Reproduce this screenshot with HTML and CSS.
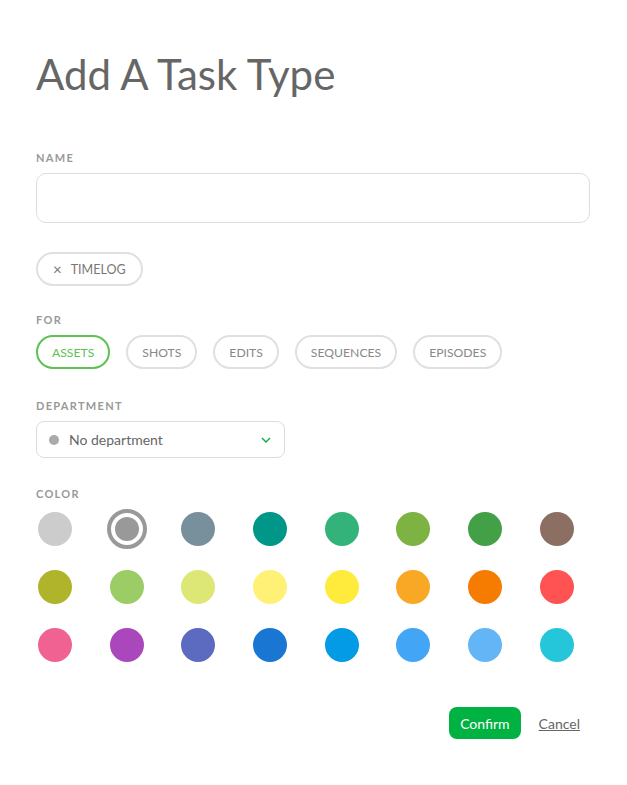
FILE: index.html
```html
<!DOCTYPE html>
<html>
<head>
<meta charset="utf-8">
<link rel="stylesheet" href="styles.css">
</head>
<body>
<div class="modal">
  <h1 class="title">Add A Task Type</h1>

  <div class="field name-field">
    <label class="label">Name</label>
    <input class="input" type="text">
  </div>

  <div class="tag-row">
    <span class="tag"><span class="tag-x">×</span>TIMELOG</span>
  </div>

  <div class="field for-field">
    <label class="label">For</label>
    <div class="pills">
      <span class="pill active">ASSETS</span>
      <span class="pill">SHOTS</span>
      <span class="pill">EDITS</span>
      <span class="pill">SEQUENCES</span>
      <span class="pill">EPISODES</span>
    </div>
  </div>

  <div class="field dept-field">
    <label class="label">Department</label>
    <div class="select">
      <span class="dot"></span>
      <span class="select-text">No department</span>
      <svg class="chev" width="10" height="6" viewBox="0 0 10 6"><path d="M1 1 L5 5 L9 1" fill="none" stroke="#00b242" stroke-width="1.4"/></svg>
    </div>
  </div>

  <div class="field color-field">
    <label class="label">Color</label>
    <div class="colors">
      <span class="swatch" style="background:#cccccc"></span>
      <span class="swatch selected"><span class="inner"></span></span>
      <span class="swatch" style="background:#78909c"></span>
      <span class="swatch" style="background:#009688"></span>
      <span class="swatch" style="background:#33b27a"></span>
      <span class="swatch" style="background:#7cb342"></span>
      <span class="swatch" style="background:#43a047"></span>
      <span class="swatch" style="background:#8d6e63"></span>
      <span class="swatch" style="background:#afb42b"></span>
      <span class="swatch" style="background:#9ccc65"></span>
      <span class="swatch" style="background:#dce775"></span>
      <span class="swatch" style="background:#fff176"></span>
      <span class="swatch" style="background:#ffeb3b"></span>
      <span class="swatch" style="background:#f9a825"></span>
      <span class="swatch" style="background:#f57c00"></span>
      <span class="swatch" style="background:#ff5252"></span>
      <span class="swatch" style="background:#f06292"></span>
      <span class="swatch" style="background:#ab47bc"></span>
      <span class="swatch" style="background:#5c6bc0"></span>
      <span class="swatch" style="background:#1976d2"></span>
      <span class="swatch" style="background:#039be5"></span>
      <span class="swatch" style="background:#42a5f5"></span>
      <span class="swatch" style="background:#64b5f6"></span>
      <span class="swatch" style="background:#26c6da"></span>
    </div>
  </div>

  <div class="actions">
    <button class="confirm">Confirm</button>
    <a class="cancel">Cancel</a>
  </div>
</div>
</body>
</html>
```

FILE: styles.css
```css
* { box-sizing: border-box; }
html, body { margin: 0; padding: 0; background: #fff; }
body { font-family: Lato, "Open Sans", sans-serif; color: #666; }

.modal { padding: 45px 37px 40px 36px; }

.title {
  margin: 0;
  font-size: 42px;
  font-weight: 400;
  color: #666;
  line-height: 58px;
}

.field { display: flex; flex-direction: column; }
.label {
  font-size: 11px;
  font-weight: 700;
  letter-spacing: 1.3px;
  text-transform: uppercase;
  color: #999;
  line-height: 14px;
  margin-bottom: 8px;
}

.name-field { margin-top: 48px; }
.input {
  height: 50px;
  width: 100%;
  border: 1px solid #ddd;
  border-radius: 10px;
  font: inherit;
  outline: none;
}

.tag-row { margin-top: 29px; display: flex; }
.tag {
  display: inline-flex;
  align-items: center;
  height: 34px;
  padding: 0 15px;
  border: 2px solid #e0e0e0;
  border-radius: 17px;
  font-size: 12.5px;
  color: #777;
}
.tag-x { font-size: 15px; margin-right: 9px; color: #777; }

.for-field { margin-top: 27px; }
.for-field .label { margin-bottom: 8px; }
.pills { display: flex; gap: 16px; }
.pill {
  display: inline-flex;
  align-items: center;
  height: 34px;
  padding: 0 14px;
  border: 2px solid #e0e0e0;
  border-radius: 17px;
  font-size: 12.2px;
  color: #888;
}
.pill.active { border-color: #5cc250; color: #5cc250; }

.dept-field { margin-top: 30px; }
.dept-field .label { margin-bottom: 8px; }
.select {
  width: 249px;
  height: 37px;
  border: 1px solid #ddd;
  border-radius: 8px;
  display: flex;
  align-items: center;
  padding: 0 12px;
  font-size: 14px;
  color: #666;
  background: #fff;
}
.dot { width: 10px; height: 10px; border-radius: 50%; background: #aaa; margin-right: 10px; }
.select-text { flex: 1; }
.chev { margin-right: 1px; }

.color-field { margin-top: 29px; }
.color-field .label { margin-bottom: 8px; }
.colors {
  display: grid;
  grid-template-columns: repeat(8, 40px);
  column-gap: 31.7px;
  row-gap: 18px;
  margin-left: -1px;
}
.swatch {
  width: 34px;
  height: 34px;
  border-radius: 50%;
  margin: 3px;
  display: flex;
  align-items: center;
  justify-content: center;
}
.swatch.selected {
  width: 40px;
  height: 40px;
  margin: 0;
  border: 4px solid #999;
  background: #fff;
}
.swatch.selected .inner {
  width: 24px;
  height: 24px;
  border-radius: 50%;
  background: #999;
}

.actions {
  margin-top: 42px;
  display: flex;
  justify-content: flex-end;
  align-items: center;
  gap: 18px;
  padding-right: 10px;
}
.confirm {
  background: #00b242;
  color: #fff;
  border: none;
  border-radius: 8px;
  height: 32px;
  padding: 0 11px;
  font-family: inherit;
  font-size: 14px;
}
.cancel {
  font-size: 14px;
  color: #666;
  text-decoration: underline;
}
```
